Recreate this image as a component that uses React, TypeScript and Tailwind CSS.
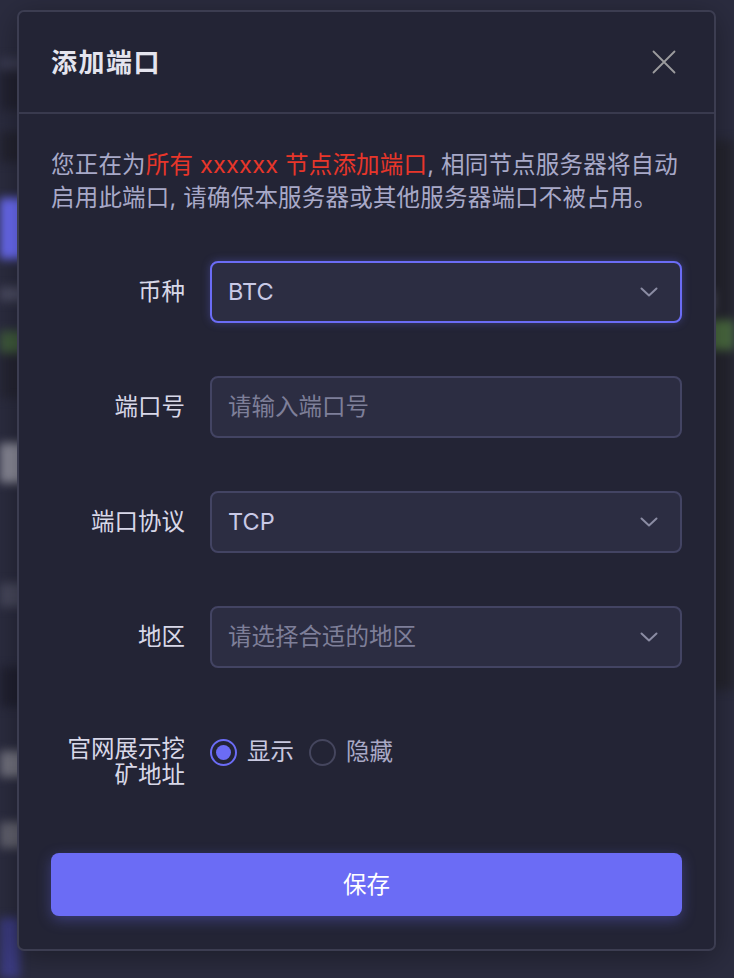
import { useState } from "react";

const FONT = { fontFamily: '"Inter", "Noto Sans CJK SC", sans-serif' };

function Chevron() {
  return (
    <svg width="18" height="10" viewBox="0 0 18 10" fill="none">
      <path d="M1.5 1.5 L9 8.5 L16.5 1.5" stroke="#8b8ca3" strokeWidth="2" strokeLinecap="round" strokeLinejoin="round" />
    </svg>
  );
}

function Backdrop() {
  // blurred page behind the dialog, only the edges show
  return (
    <div className="flex h-full justify-between blur-[5px]">
      <div className="flex w-[40px] flex-col">
        <div className="h-[58px]" />
        <div className="h-[12px] bg-[#3b3c52]" />
        <div className="h-[40px] bg-[#222231]" />
        <div className="h-[22px]" />
        <div className="h-[30px] bg-[#232330]" />
        <div className="h-[36px]" />
        <div className="h-[62px] rounded-r bg-[#6b6cf5]" />
        <div className="h-[28px]" />
        <div className="h-[14px] bg-[#4b4c62]" />
        <div className="h-[30px]" />
        <div className="h-[22px] bg-[#3f5a3c]" />
        <div className="h-[45px] bg-[#252533]" />
        <div className="h-[45px]" />
        <div className="h-[40px] w-[30px] bg-[#8a8a98]" />
        <div className="h-[100px]" />
        <div className="h-[24px] bg-[#47485c]" />
        <div className="h-[60px]" />
        <div className="h-[40px] bg-[#202030]" />
        <div className="h-[45px]" />
        <div className="h-[26px] w-[30px] bg-[#72727f]" />
        <div className="h-[45px]" />
        <div className="h-[26px] w-[30px] bg-[#62626f]" />
        <div className="h-[70px]" />
        <div className="h-[60px] w-[20px] bg-[#3b3b80]" />
      </div>
      <div className="flex w-[40px] flex-col">
        <div className="h-[140px]" />
        <div className="flex h-[550px] flex-col bg-[#25252f]">
          <div className="h-[150px]" />
          <div className="h-[22px] w-[20px] bg-[#58596c]" />
          <div className="h-[8px]" />
          <div className="h-[30px] bg-[#4a6a40]" />
        </div>
      </div>
    </div>
  );
}

function Field({ label, children }: { label: string; children: React.ReactNode }) {
  return (
    <div className="flex items-center gap-[25px]">
      <div className="w-[134px] text-right text-[23.5px] leading-[30px] text-[#d8d8e8]">{label}</div>
      <div className="flex-1">{children}</div>
    </div>
  );
}

export default function App() {
  const [show, setShow] = useState(true);

  return (
    <div className="relative h-[978px] w-[734px] overflow-hidden bg-[#2b2c3f]" style={FONT}>
      <Backdrop />

      {/* dialog */}
      <div className="absolute left-[17px] top-[10px] w-[699px] rounded-[7px] border-2 border-[#3c3d51] bg-[#232435] shadow-[0_6px_30px_rgba(0,0,0,0.35)]">
        <div className="flex h-[102px] items-center justify-between border-b-2 border-[#393a4e] pl-8 pr-[36px]">
          <h1 className="text-[26px] font-bold tracking-[1.5px] text-[#e4e4ee]">添加端口</h1>
          <button className="p-0.5">
            <svg width="24" height="24" viewBox="0 0 24 24" fill="none">
              <path d="M1.5 1.5 L22.5 22.5 M22.5 1.5 L1.5 22.5" stroke="#9c9c9e" strokeWidth="1.8" strokeLinecap="round" />
            </svg>
          </button>
        </div>

        <div className="px-8 pb-[33px] pt-[33.5px]">
          <p className="text-[23.5px] leading-[33px] tracking-[0.2px] text-[#a8a9c8]">
            您正在为<span className="text-[#e8362a]">所有 xxxxxx 节点添加端口</span>, 相同节点服务器将自动
            <br />
            启用此端口, 请确保本服务器或其他服务器端口不被占用。
          </p>

          <div className="mt-[47.5px] flex flex-col gap-[53px]">
            <Field label="币种">
              <div className="flex h-[62px] items-center justify-between rounded-[8px] border-2 border-[#6b6cf5] bg-[#2c2d42] pl-4 pr-[22px] shadow-[0_0_8px_rgba(107,108,245,0.35)]">
                <span className="text-[23.5px] text-[#c9c9e6]">BTC</span>
                <Chevron />
              </div>
            </Field>
            <Field label="端口号">
              <div className="flex h-[62px] items-center rounded-[8px] border-2 border-[#434463] bg-[#2c2d42] pl-4 pr-[22px]">
                <input
                  placeholder="请输入端口号"
                  className="w-full bg-transparent text-[23.5px] text-[#c9c9e6] outline-none placeholder:text-[#7e7f99]"
                />
              </div>
            </Field>
            <Field label="端口协议">
              <div className="flex h-[62px] items-center justify-between rounded-[8px] border-2 border-[#434463] bg-[#2c2d42] pl-4 pr-[22px]">
                <span className="text-[23.5px] text-[#c9c9e6]">TCP</span>
                <Chevron />
              </div>
            </Field>
            <Field label="地区">
              <div className="flex h-[62px] items-center justify-between rounded-[8px] border-2 border-[#434463] bg-[#2c2d42] pl-4 pr-[22px]">
                <span className="text-[23.5px] text-[#7e7f99]">请选择合适的地区</span>
                <Chevron />
              </div>
            </Field>
          </div>

          <div className="mt-[68px] flex items-start gap-[25px]">
            <div className="w-[134px] text-right text-[23.5px] leading-[26px] text-[#d8d8e8]">
              官网展示挖
              <br />
              矿地址
            </div>
            <div className="mt-[1px] flex h-[30px] items-center gap-[10px]">
              <button onClick={() => setShow(true)} className="flex items-center gap-[10px]">
                <span className={"flex h-[27px] w-[27px] items-center justify-center rounded-full border-[2.5px] " + (show ? "border-[#6b6cf5]" : "border-[#45465e]")}>
                  {show && <span className="h-[15px] w-[15px] rounded-full bg-[#6b6cf5]" />}
                </span>
                <span className="text-[23.5px] text-[#c8c8e0]">显示</span>
              </button>
              <button onClick={() => setShow(false)} className="ml-[5px] flex items-center gap-[10px]">
                <span className={"flex h-[27px] w-[27px] items-center justify-center rounded-full border-[2.5px] " + (!show ? "border-[#6b6cf5]" : "border-[#45465e]")}>
                  {!show && <span className="h-[15px] w-[15px] rounded-full bg-[#6b6cf5]" />}
                </span>
                <span className="text-[23.5px] text-[#a9a9c6]">隐藏</span>
              </button>
            </div>
          </div>

          <button className="mt-[65px] flex h-[63px] w-full items-center justify-center rounded-[8px] bg-[#6b6cf5] text-[23.5px] text-white shadow-[0_4px_14px_rgba(107,108,245,0.35)]">
            保存
          </button>
        </div>
      </div>
    </div>
  );
}
